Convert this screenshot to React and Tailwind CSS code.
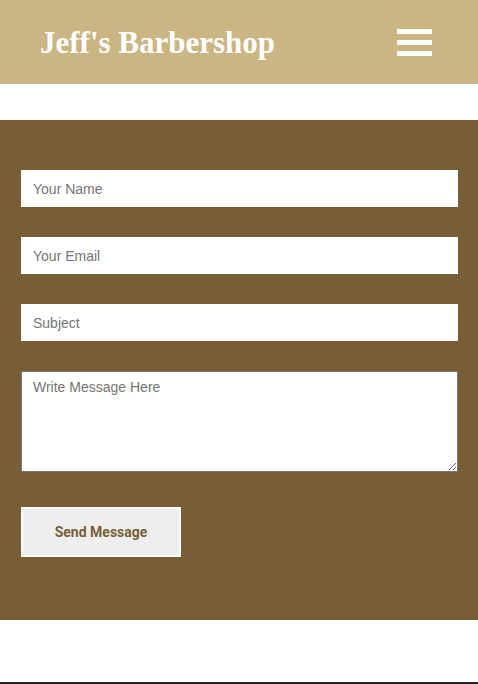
import React from 'react';

const fields = ['Your Name', 'Your Email', 'Subject'];

export default function App() {
  return (
    <div className="min-h-[684px] bg-white" style={{ fontFamily: 'Roboto, "Liberation Sans", sans-serif' }}>
      {/* Header */}
      <header className="h-[84px] bg-[#cbb582] flex items-center justify-between pl-[40px] pr-[46px]">
        <h1
          className="text-white font-bold text-[31px] leading-none pt-[1px]"
          style={{ fontFamily: '"Liberation Serif", serif' }}
        >
          Jeff's Barbershop
        </h1>
        <button className="flex flex-col gap-[6px] w-[35px]" aria-label="menu">
          <span className="block h-[5px] w-full bg-white" />
          <span className="block h-[5px] w-full bg-white" />
          <span className="block h-[5px] w-full bg-white" />
        </button>
      </header>

      <div className="h-[36px]" />

      {/* Contact form */}
      <section className="bg-[#785e37] pl-[21px] pr-[20px] pt-[50px] pb-[63px]">
        <form className="flex flex-col gap-[30px]" onSubmit={e => e.preventDefault()}>
          {fields.map(f => (
            <input
              key={f}
              type="text"
              placeholder={f}
              className="h-[37px] w-full bg-white px-[12px] text-[14px] text-[#333] placeholder:text-[#757575] outline-none"
              style={{ fontFamily: '"Liberation Sans", Arial, sans-serif' }}
            />
          ))}
          <textarea
            placeholder="Write Message Here"
            className="h-[101px] w-full bg-white border border-[#767676] px-[11px] py-[5px] text-[14px] text-[#333] placeholder:text-[#757575] outline-none resize-y"
            style={{ fontFamily: '"Liberation Sans", Arial, sans-serif' }}
          />
          <div className="pt-[5px]">
            <button
              type="submit"
              className="w-[160px] h-[50px] bg-[#eeeeee] border-2 border-white text-[#785e37] font-bold text-[14px]"
            >
              Send Message
            </button>
          </div>
        </form>
      </section>

      <div className="h-[62px]" />
      <div className="h-[3px] bg-[#222222]" />
    </div>
  );
}
